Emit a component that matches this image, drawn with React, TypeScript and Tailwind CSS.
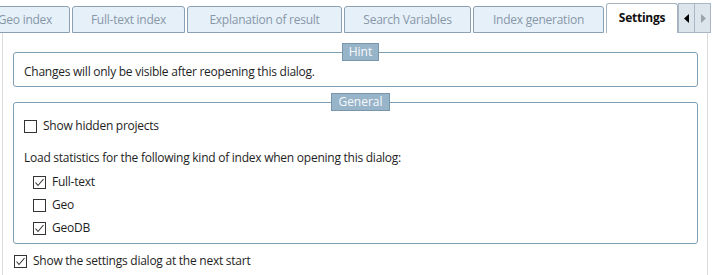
import React from "react";

const FONT = { fontFamily: '"Open Sans", "Noto Sans", Arial, sans-serif' };

function Check({ checked }: { checked?: boolean }) {
  return (
    <span className="w-[13px] h-[13px] border border-[#333333] bg-white flex items-center justify-center shrink-0">
      {checked && (
        <svg width="11" height="11" viewBox="0 0 11 11">
          <polyline points="1.5,5.5 4,8.5 9.5,2" fill="none" stroke="#333333" strokeWidth="1.1" />
        </svg>
      )}
    </span>
  );
}

function Row({ checked, label, cls }: { checked: boolean; label: string; cls: string }) {
  return (
    <div className={"h-[22px] flex items-center gap-[6px] " + cls}>
      <Check checked={checked} />
      <span>{label}</span>
    </div>
  );
}

function Tab({ label, w }: { label: string; w: string }) {
  return (
    <div
      className={
        "h-[27px] shrink-0 border border-[#8ba0b3] rounded-t-[3px] bg-[#e6f0f8] text-[#8797a9] flex items-center justify-center whitespace-nowrap pt-[1px] " +
        w
      }
    >
      {label}
    </div>
  );
}

export default function App() {
  return (
    <div
      className="w-[714px] h-[275px] bg-white overflow-hidden flex flex-col text-[12px] tracking-[-0.25px] text-[#1e1e1e]"
      style={FONT}
    >
      <div className="h-[33px] flex items-end gap-[2px] shrink-0 overflow-hidden">
        <Tab label="Geo index" w="w-[90px] ml-[-20px]" />
        <Tab label="Full-text index" w="w-[113px]" />
        <Tab label="Explanation of result" w="w-[155px]" />
        <Tab label="Search Variables" w="w-[127px]" />
        <Tab label="Index generation" w="w-[131px]" />
        <div className="h-[30px] w-[72px] shrink-0 border border-b-0 border-[#a4b3c1] rounded-t-[3px] bg-white text-[#111111] font-bold flex items-center justify-center pb-[1px]">
          Settings
        </div>
        <div className="h-[30px] flex shrink-0 ml-[-2px]">
          <div className="w-[17px] h-full bg-[#dde5ec] border border-[#a9b7c4] flex items-center justify-center">
            <svg width="6" height="9" viewBox="0 0 6 9"><polygon points="5,0 5,9 0,4.5" fill="#000000" /></svg>
          </div>
          <div className="w-[16px] h-full bg-[#dde5ec] border border-l-0 border-[#a9b7c4] flex items-center justify-center">
            <svg width="6" height="9" viewBox="0 0 6 9"><polygon points="1,0 1,9 6,4.5" fill="#9aa4ad" /></svg>
          </div>
        </div>
      </div>
      <div className="ml-[2px] w-[706px] flex-1 border-l border-r border-[#dcdcdc] flex flex-col">
        <fieldset className="mt-[10px] ml-[10px] mr-[9px] border border-[#7f9fb5] rounded-[3px] pl-[10px] pt-[3px] pb-[6px]">
          <legend className="mx-auto h-[18px] px-[6px] bg-[#98b4c9] border border-[#7896ab] text-[#f6f9fc] leading-[16px] tracking-normal">
            Hint
          </legend>
          <div className="h-[16px] leading-[16px]">Changes will only be visible after reopening this dialog.</div>
        </fieldset>
        <fieldset className="mt-[6px] ml-[10px] mr-[9px] border border-[#7f9fb5] rounded-[3px] pl-[10px] pt-[4px] pb-[4px] flex flex-col gap-[1px]">
          <legend className="mx-auto h-[18px] px-[6px] bg-[#98b4c9] border border-[#7896ab] text-[#f6f9fc] leading-[16px] tracking-normal">
            General
          </legend>
          <Row checked={false} label="Show hidden projects" cls="" />
          <div className="h-[22px] flex items-center mt-[9px]">
            Load statistics for the following kind of index when opening this dialog:
          </div>
          <Row checked={true} label="Full-text" cls="ml-[9px] mt-[1px]" />
          <Row checked={false} label="Geo" cls="ml-[9px]" />
          <Row checked={true} label="GeoDB" cls="ml-[9px]" />
        </fieldset>
        <Row checked={true} label="Show the settings dialog at the next start" cls="mt-[6px] ml-[11px]" />
      </div>
    </div>
  );
}
